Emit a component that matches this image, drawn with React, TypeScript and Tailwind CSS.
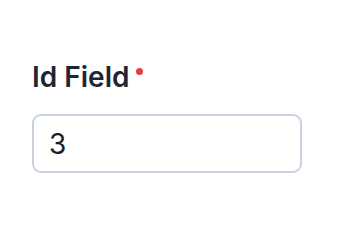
export default function App() {
  return (
    <div className="w-[344px] h-[230px] bg-white font-['Inter',sans-serif]">
      <div className="pt-[56px] px-[32px]">
        <label className="flex items-start text-[28px] leading-[42px] font-semibold text-[#1e2533]">
          Id Field
          <span className="ml-[7px] mt-[12px] w-[7px] h-[7px] rounded-full bg-[#e53e3e]" />
        </label>
        <div className="mt-[16px] w-[270px] h-[59px] flex items-center rounded-[9px] border-2 border-[#c8d2df] px-[15px]">
          <span className="text-[28px] text-[#1a202c]">3</span>
        </div>
      </div>
    </div>
  )
}
